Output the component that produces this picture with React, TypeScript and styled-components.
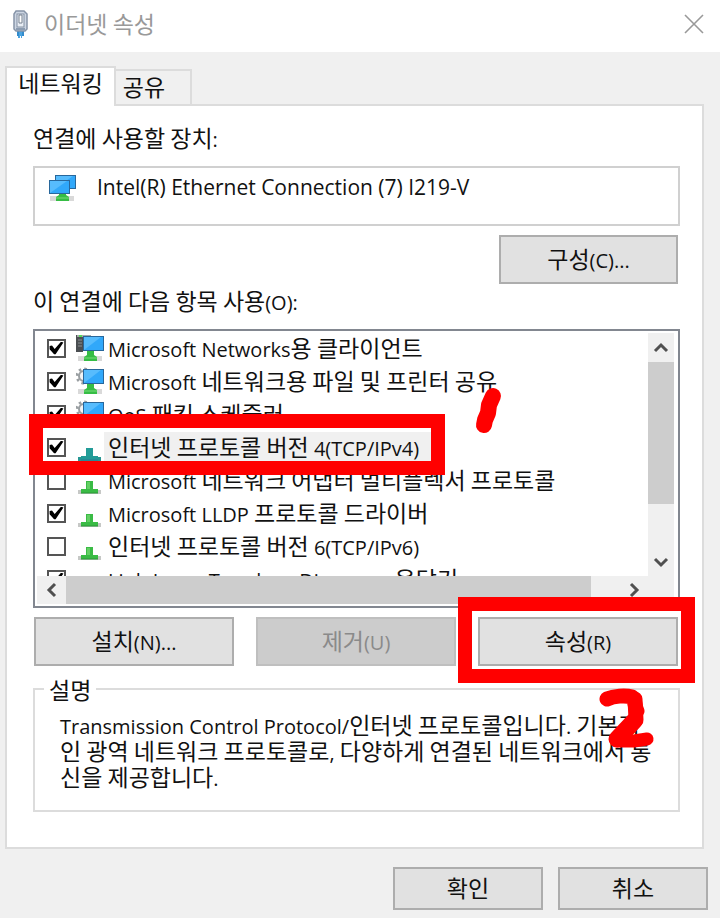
import React from "react";
import styled, { createGlobalStyle } from "styled-components";

const GlobalStyle = createGlobalStyle`
  *, *::before, *::after { box-sizing: border-box; }
  body {
    margin: 0;
    background: #f0f0f0;
    color: #111;
    font-family: "Noto Sans CJK KR", sans-serif;
    font-size: 23px;
    line-height: 32px;
  }
  button, input { font: inherit; color: inherit; }
`;

const Latin = styled.span`
  font-family: "Open Sans", "Noto Sans", sans-serif;
  font-size: 20px;
  line-height: 1;
`;

/* Sets runs of Latin letters, digits and punctuation in the Latin face. */
const Mixed = ({ text }: { text: string }) => (
  <>
    {text.split(/([!-~]+(?: +[!-~]+)*)/).map((run, i) =>
      i % 2 ? <Latin key={i}>{run}</Latin> : run
    )}
  </>
);

const Dialog = styled.main`
  display: flex;
  flex-direction: column;
  min-height: 100vh;
`;

const TitleBar = styled.header`
  display: flex;
  align-items: center;
  height: 52px;
  padding: 0 16px 4px 12px;
  background: #fff;
`;

const Title = styled.h1`
  flex: 1;
  margin: 0 0 0 15px;
  padding-bottom: 2px;
  font-size: 23px;
  font-weight: 400;
  color: #999;
`;

const CloseButton = styled.button`
  display: flex;
  padding: 0;
  border: 0;
  background: none;
`;

const Content = styled.div`
  padding: 14px 16px 0 5px;
`;

const TabList = styled.div`
  display: flex;
  align-items: flex-end;
  height: 38px;
`;

const Tab = styled.button<{ $active?: boolean }>`
  position: relative;
  z-index: ${(p) => (p.$active ? 1 : 0)};
  width: ${(p) => (p.$active ? 111 : 76)}px;
  height: ${(p) => (p.$active ? 40 : 35)}px;
  margin-bottom: ${(p) => (p.$active ? -2 : 0)}px;
  padding: ${(p) => (p.$active ? "0 0 10px" : "0 18px 4px 0")};
  border: 2px solid #dcdcdc;
  border-bottom: 0;
  border-left-width: ${(p) => (p.$active ? 2 : 0)}px;
  background: ${(p) => (p.$active ? "#fff" : "#f0f0f0")};
  line-height: 28px;
  white-space: nowrap;
`;

const Panel = styled.section`
  padding: 15px 22px 35px 26px;
  border: 2px solid #dcdcdc;
  background: #fff;
`;

const Caption = styled.p`
  margin: 0;
`;

const DeviceBox = styled.div`
  display: flex;
  align-items: flex-start;
  gap: 21px;
  height: 60px;
  margin-top: 13px;
  padding: 1px 13px;
  border: 2px solid #d0d0d0;

  ${Latin} { font-size: 21px; }
`;

const DeviceIcon = styled.span`
  display: flex;
  padding-top: 5px;
`;

const PushButton = styled.button`
  width: 100%;
  height: 49px;
  padding: 0 0 4px;
  border: 2px solid #adadad;
  background: #e1e1e1;
  text-align: center;

  &:disabled {
    border-color: #bfbfbf;
    background: #ccc;
    color: #8a8a8a;
  }
`;

const ConfigureRow = styled.div`
  display: flex;
  justify-content: flex-end;
  margin: 9px 2px 0 0;

  ${PushButton} { width: 179px; }
`;

const ListFrame = styled.div`
  position: relative;
  display: grid;
  grid-template: 243px 28px / 1fr 26px;
  height: 279px;
  margin-top: 13px;
  padding: 2px 4px 2px 2px;
  border: 2px solid #828790;
`;

const Items = styled.ul`
  margin: 0;
  padding: 0;
  overflow: hidden;
  list-style: none;
`;

const Item = styled.li`
  display: flex;
  align-items: center;
  height: 33px;
  padding: 0 0 3px 10px;
`;

const ItemLabel = styled.label<{ $selected?: boolean }>`
  flex: ${(p) => (p.$selected ? "0 1 328px" : "0 1 auto")};
  padding: 0 0 2px 4px;
  background: ${(p) => (p.$selected ? "#f0f0f0" : "transparent")};
  line-height: 28px;
  white-space: nowrap;
`;

const CheckBox = styled.input`
  display: grid;
  place-items: center;
  flex: none;
  width: 19px;
  height: 19px;
  margin: 0 10px 0 0;
  border: 2px solid #555;
  background: #fff;
  appearance: none;

  &:checked::before {
    content: "";
    width: 15px;
    height: 13px;
    background: #000;
    clip-path: polygon(4% 34%, 20% 30%, 38% 58%, 80% 2%, 96% 8%, 44% 98%, 34% 98%, 4% 60%);
  }
`;

const ItemIcon = styled.span`
  display: flex;
  flex: none;
  width: 28px;
`;

const VerticalBar = styled.div`
  display: flex;
  flex-direction: column;
  background: #f0f0f0;
`;

const HorizontalBar = styled.div`
  display: flex;
  background: #f0f0f0;
`;

const Corner = styled.div`
  background: #f0f0f0;
`;

const ArrowButton = styled.button`
  display: flex;
  flex: 0 0 29px;
  align-items: center;
  justify-content: center;
  padding: 0;
  border: 0;
  background: none;
`;

const Track = styled.div<{ $vertical?: boolean }>`
  display: flex;
  flex: 1;
  flex-direction: ${(p) => (p.$vertical ? "column" : "row")};
`;

const Thumb = styled.div<{ $share: number }>`
  flex: 0 0 ${(p) => p.$share}%;
  background: #cdcdcd;
`;

const Actions = styled.div`
  display: grid;
  grid-template-columns: repeat(3, 1fr);
  gap: 22px;
  margin: 9px 2px 0 1px;
`;

const Marked = styled.div`
  position: relative;
`;

const ItemMark = styled.div`
  position: absolute;
  top: 83px;
  left: -6px;
  width: 416px;
  height: 61px;
  border: 14px solid #f00;
  pointer-events: none;
`;

const ButtonMark = styled.div`
  position: absolute;
  inset: -20px -17px -17px -20px;
  border: 14px solid #f00;
  pointer-events: none;
`;

const DigitOne = styled.svg`
  position: absolute;
  top: 54px;
  left: 436px;
  pointer-events: none;
`;

const DigitTwo = styled.svg`
  position: absolute;
  top: 70px;
  left: 120px;
  pointer-events: none;
`;

const Description = styled.fieldset`
  min-width: 0;
  margin: 7px 0 0;
  padding: 6px 18px 21px 25px;
  border: 2px solid #dcdcdc;
  line-height: 26px;

  legend {
    margin-left: -16px;
    padding: 0 5px;
    line-height: 32px;
  }

  p { margin: 0; }
`;

const Footer = styled.footer`
  display: flex;
  justify-content: flex-end;
  gap: 15px;
  padding: 18px 12px 8px;

  ${PushButton} { width: 150px; height: 43px; }
`;

const PlugIcon = () => (
  <svg width="17" height="29" viewBox="0 0 17 29" aria-hidden="true">
    <path d="M5 20h7v6h-2v2H9v-2H8v2H6v-2H5z" fill="#4aa3e0" />
    <path d="M6 21v5M11 21v5" stroke="#1f74b8" />
    <path d="M4 1h8l3 3v15l-2 2H4l-2-2V4z" fill="#cdd6e3" stroke="#8694a8" strokeWidth="1.5" />
    <path d="M4 19h9" stroke="#8b9bb0" strokeWidth="2" />
    <rect x="5" y="4" width="7" height="13" fill="#e8edf4" stroke="#8390a3" />
    <path d="M7 5h3v8H7z" fill="#fff" stroke="#75808f" />
  </svg>
);

const Stand = () => (
  <g>
    <path d="M2 22h24v5H2z" fill="#d9d9d9" />
    <path d="M11 17h7v4l3 2v4H8v-4l3-2z" fill="#36bd45" />
    <path d="M8 24h13" stroke="#77dc78" />
  </g>
);

const Screen = ({ x, y, w, h }: { x: number; y: number; w: number; h: number }) => (
  <g>
    <rect x={x + 0.5} y={y + 0.5} width={w - 1} height={h - 1} fill="#31a8fa" stroke="#28679b" />
    <path d={`M${x + 1} ${y + h - 1}V${y + 1}h${w - 4}z`} fill="#6bc6ff" opacity=".65" />
  </g>
);

const AdapterIcon = () => (
  <svg width="28" height="28" viewBox="0 0 28 28" aria-hidden="true">
    <Stand />
    <Screen x={7} y={1} w={21} h={14} />
    <Screen x={1} y={6} w={21} h={14} />
  </svg>
);

const ClientIcon = () => (
  <svg width="28" height="28" viewBox="0 0 28 28" aria-hidden="true">
    <path d="M0 1h15v3H7v14H0z" fill="#4b4f52" />
    <path d="M1 1h14v2H1z" fill="#a4a8aa" />
    <path d="M2 6h4M2 9h4M2 12h4" stroke="#8b9092" />
    <path d="M3 1h3v2H3z" fill="#55d85a" />
    <Stand />
    <Screen x={7} y={2} w={21} h={15} />
  </svg>
);

const ServiceIcon = () => (
  <svg width="28" height="28" viewBox="0 0 28 28" aria-hidden="true">
    <circle cx="8" cy="9" r="5" fill="#f4f4f4" stroke="#9a9fa2" strokeWidth="2" />
    <circle cx="8" cy="9" r="7" fill="none" stroke="#9a9fa2" strokeWidth="3" strokeDasharray="2.5 3" />
    <Stand />
    <Screen x={7} y={2} w={21} h={15} />
  </svg>
);

const ProtocolIcon = ({ selected }: { selected?: boolean }) => (
  <svg width="28" height="28" viewBox="0 0 28 28" aria-hidden="true">
    <path d="M2 24h23v4H2z" fill={selected ? "#279793" : "#c6c8c6"} />
    <path d="M10 15h7v8h5v4H5v-4h5z" fill={selected ? "#229b98" : "#3abb45"} />
    <path d="M11 16h3v7h-3z" fill={selected ? "#239f99" : "#63cf64"} />
    <path d="M5 27h17" stroke={selected ? "#2c7896" : "#2a9639"} />
  </svg>
);

const arrowPaths = {
  up: "M3 12L9 6L15 12",
  down: "M3 6L9 12L15 6",
  left: "M12 3L6 9L12 15",
  right: "M6 3L12 9L6 15",
};

const Arrow = ({ to }: { to: keyof typeof arrowPaths }) => (
  <svg width="18" height="18" viewBox="0 0 18 18" aria-hidden="true">
    <path d={arrowPaths[to]} fill="none" stroke="#505050" strokeWidth="3" />
  </svg>
);

const items = [
  { name: "Microsoft Networks용 클라이언트", icon: <ClientIcon />, checked: true },
  { name: "Microsoft 네트워크용 파일 및 프린터 공유", icon: <ServiceIcon />, checked: true },
  { name: "QoS 패킷 스케줄러", icon: <ServiceIcon />, checked: true },
  { name: "인터넷 프로토콜 버전 4(TCP/IPv4)", icon: <ProtocolIcon selected />, checked: true, selected: true },
  { name: "Microsoft 네트워크 어댑터 멀티플렉서 프로토콜", icon: <ProtocolIcon />, checked: false },
  { name: "Microsoft LLDP 프로토콜 드라이버", icon: <ProtocolIcon />, checked: true },
  { name: "인터넷 프로토콜 버전 6(TCP/IPv6)", icon: <ProtocolIcon />, checked: false },
  { name: "Link-Layer Topology Discovery 응답기", icon: <ProtocolIcon />, checked: true },
];

export default function App() {
  return (
    <>
      <GlobalStyle />
      <Dialog>
        <TitleBar>
          <PlugIcon />
          <Title>이더넷 속성</Title>
          <CloseButton aria-label="닫기">
            <svg width="20" height="20" viewBox="0 0 20 20" aria-hidden="true">
              <path d="M1 1l18 18M19 1L1 19" stroke="#999" strokeWidth="1.6" />
            </svg>
          </CloseButton>
        </TitleBar>

        <Content>
          <TabList role="tablist">
            <Tab role="tab" aria-selected="true" $active>네트워킹</Tab>
            <Tab role="tab" aria-selected="false">공유</Tab>
          </TabList>

          <Panel role="tabpanel">
            <Caption><Mixed text="연결에 사용할 장치:" /></Caption>
            <DeviceBox>
              <DeviceIcon><AdapterIcon /></DeviceIcon>
              <span><Mixed text="Intel(R) Ethernet Connection (7) I219-V" /></span>
            </DeviceBox>
            <ConfigureRow>
              <PushButton><Mixed text="구성(C)..." /></PushButton>
            </ConfigureRow>

            <Caption><Mixed text="이 연결에 다음 항목 사용(O):" /></Caption>
            <ListFrame>
              <Items>
                {items.map((item, i) => (
                  <Item key={item.name}>
                    <CheckBox type="checkbox" id={`item-${i}`} defaultChecked={item.checked} />
                    <ItemIcon>{item.icon}</ItemIcon>
                    <ItemLabel htmlFor={`item-${i}`} $selected={item.selected}>
                      <Mixed text={item.name} />
                    </ItemLabel>
                  </Item>
                ))}
              </Items>
              <VerticalBar>
                <ArrowButton aria-label="위로"><Arrow to="up" /></ArrowButton>
                <Track $vertical><Thumb $share={77} /></Track>
                <ArrowButton aria-label="아래로"><Arrow to="down" /></ArrowButton>
              </VerticalBar>
              <HorizontalBar>
                <ArrowButton aria-label="왼쪽으로"><Arrow to="left" /></ArrowButton>
                <Track><Thumb $share={95} /></Track>
                <ArrowButton aria-label="오른쪽으로"><Arrow to="right" /></ArrowButton>
              </HorizontalBar>
              <Corner />
              <ItemMark />
              <DigitOne width="36" height="50" viewBox="0 0 36 50" aria-hidden="true">
                <path d="M22 11L18 20L17 28L14 35L13 40" fill="none" stroke="#f00" strokeWidth="16" strokeLinecap="round" strokeLinejoin="round" />
              </DigitOne>
            </ListFrame>

            <Actions>
              <PushButton><Mixed text="설치(N)..." /></PushButton>
              <PushButton disabled><Mixed text="제거(U)" /></PushButton>
              <Marked>
                <PushButton><Mixed text="속성(R)" /></PushButton>
                <ButtonMark />
                <DigitTwo width="58" height="66" viewBox="0 0 58 66" aria-hidden="true">
                  <g fill="none" stroke="#f00" strokeLinecap="round" strokeLinejoin="round">
                    <path d="M9 12C16 9 27 8 34 10C38 14 36 18 39 24" strokeWidth="15" />
                    <path d="M37 12L38 33L21 51" strokeWidth="15" />
                    <path d="M36 34L19 52" strokeWidth="17" />
                    <path d="M19 54L36 54L49 52" strokeWidth="13" />
                  </g>
                </DigitTwo>
              </Marked>
            </Actions>

            <Description>
              <legend>설명</legend>
              <p>
                <Mixed text="Transmission Control Protocol/인터넷 프로토콜입니다. 기본적인 광역 네트워크 프로토콜로, 다양하게 연결된 네트워크에서 통신을 제공합니다." />
              </p>
            </Description>
          </Panel>
        </Content>

        <Footer>
          <PushButton>확인</PushButton>
          <PushButton>취소</PushButton>
        </Footer>
      </Dialog>
    </>
  );
}
